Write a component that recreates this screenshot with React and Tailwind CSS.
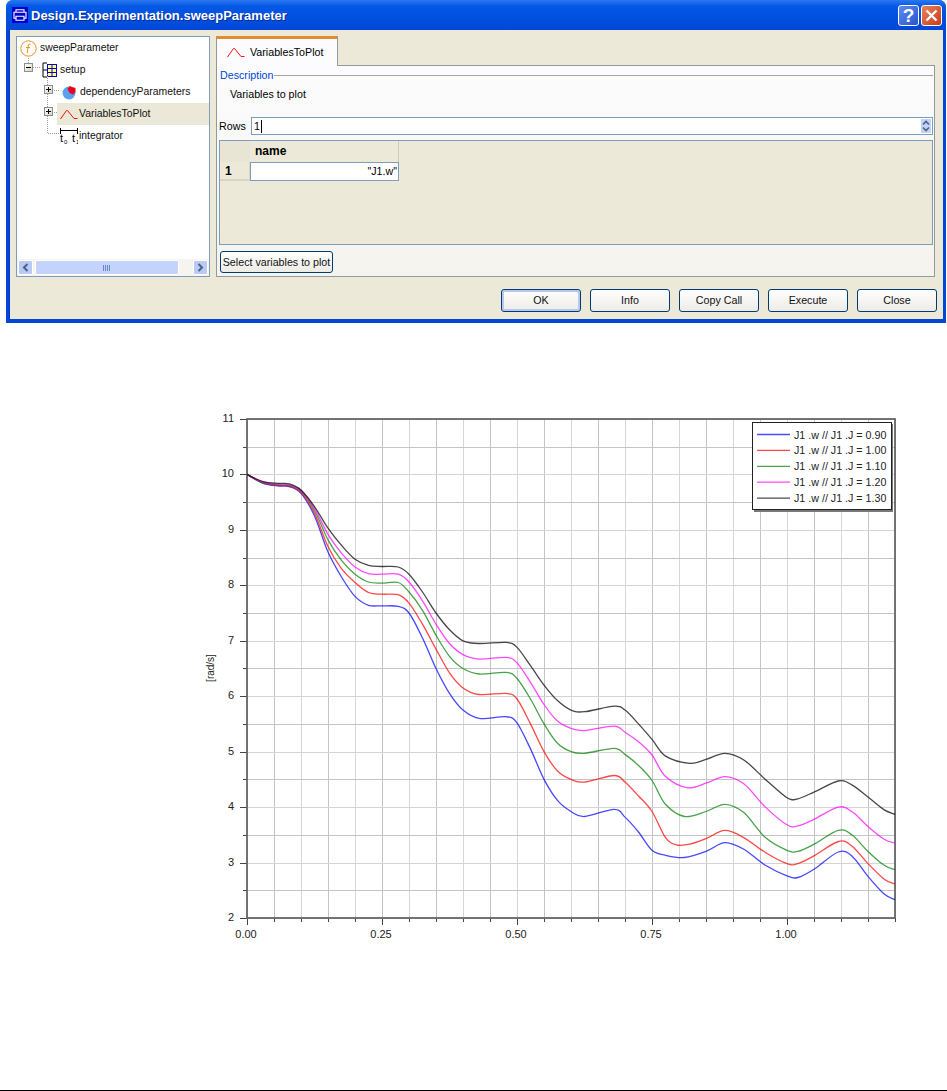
const FONT = "font-['Liberation_Sans',Arial,sans-serif]";

const xs = [0, 0.03, 0.06, 0.1, 0.125, 0.15, 0.175, 0.2, 0.225, 0.25, 0.28, 0.3, 0.325, 0.35, 0.375, 0.4, 0.43, 0.48, 0.5, 0.525, 0.55, 0.575, 0.6, 0.625, 0.68, 0.7, 0.725, 0.75];

const curves = [
  {
    label: "J1 .w // J1 .J = 0.90",
    color: "#0000ff",
    values: [10, 9.84, 9.79, 9.66, 9.25, 8.6, 8.15, 7.8, 7.64, 7.63, 7.62, 7.5, 7.05, 6.5, 6.05, 5.75, 5.6, 5.63, 5.52, 5.05, 4.5, 4.12, 3.92, 3.83, 3.96, 3.82, 3.55, 3.22],
    tail: [[0.775, 3.13], [0.81, 3.09], [0.85, 3.2], [0.885, 3.36], [0.92, 3.24], [0.96, 2.95], [1.0, 2.76], [1.02, 2.73], [1.05, 2.88], [1.095, 3.19], [1.12, 3.12], [1.15, 2.75], [1.18, 2.43], [1.2, 2.33]],
  },
  {
    label: "J1 .w // J1 .J = 1.00",
    color: "#ff0000",
    values: [10, 9.85, 9.8, 9.68, 9.3, 8.7, 8.3, 8.05, 7.87, 7.84, 7.83, 7.68, 7.3, 6.85, 6.42, 6.15, 6.03, 6.05, 5.95, 5.5, 5.0, 4.65, 4.5, 4.45, 4.57, 4.45, 4.2, 3.92],
    tail: [[0.775, 3.45], [0.795, 3.32], [0.82, 3.33], [0.85, 3.43], [0.885, 3.58], [0.92, 3.45], [0.96, 3.18], [1.0, 2.98], [1.02, 2.98], [1.05, 3.12], [1.095, 3.38], [1.12, 3.3], [1.15, 2.98], [1.18, 2.7], [1.2, 2.61]],
  },
  {
    label: "J1 .w // J1 .J = 1.10",
    color: "#008000",
    values: [10, 9.85, 9.81, 9.7, 9.35, 8.82, 8.45, 8.2, 8.06, 8.04, 8.05, 7.88, 7.55, 7.1, 6.72, 6.5, 6.4, 6.43, 6.32, 5.95, 5.5, 5.15, 5.0, 4.97, 5.06, 4.95, 4.75, 4.48],
    tail: [[0.775, 4.05], [0.81, 3.83], [0.85, 3.92], [0.885, 4.05], [0.92, 3.9], [0.96, 3.45], [1.0, 3.22], [1.02, 3.2], [1.05, 3.33], [1.095, 3.58], [1.12, 3.5], [1.15, 3.2], [1.18, 2.95], [1.2, 2.87]],
  },
  {
    label: "J1 .w // J1 .J = 1.20",
    color: "#ff00ff",
    values: [10, 9.86, 9.82, 9.71, 9.39, 8.92, 8.58, 8.33, 8.21, 8.2, 8.2, 8.06, 7.72, 7.3, 6.95, 6.75, 6.67, 6.7, 6.6, 6.25, 5.85, 5.55, 5.42, 5.38, 5.46, 5.35, 5.18, 4.94],
    tail: [[0.775, 4.55], [0.815, 4.35], [0.85, 4.43], [0.885, 4.55], [0.92, 4.42], [0.96, 4.0], [1.0, 3.68], [1.02, 3.66], [1.05, 3.78], [1.095, 4.0], [1.12, 3.92], [1.15, 3.65], [1.18, 3.42], [1.2, 3.35]],
  },
  {
    label: "J1 .w // J1 .J = 1.30",
    color: "#000000",
    values: [10, 9.87, 9.84, 9.72, 9.42, 9.03, 8.72, 8.47, 8.36, 8.34, 8.33, 8.2, 7.88, 7.5, 7.2, 7.0, 6.95, 6.97, 6.88, 6.55, 6.2, 5.92, 5.75, 5.72, 5.82, 5.75, 5.5, 5.22],
    tail: [[0.775, 4.92], [0.82, 4.79], [0.85, 4.86], [0.885, 4.97], [0.92, 4.85], [0.96, 4.5], [1.0, 4.17], [1.02, 4.15], [1.05, 4.27], [1.095, 4.47], [1.12, 4.4], [1.15, 4.18], [1.18, 3.95], [1.2, 3.87]],
  },
];

const plotX = (v) => 247 + v * 540;
const plotY = (v) => 419 + (11 - v) * 55.44;

function curvePoints(curve) {
  const head = curve.values.map((y, i) => [xs[i], y]);
  // shoulder before the first drop stays flat a little longer
  head.splice(3, 0, [0.078, curve.values[2] - 0.01]);
  return [...head, ...curve.tail];
}

function smoothPath(points) {
  const pts = points.map(([x, y]) => [plotX(x), plotY(y)]);
  let d = `M${pts[0][0]} ${pts[0][1]}`;
  for (let i = 0; i < pts.length - 1; i++) {
    const p0 = pts[i - 1] || pts[i];
    const p1 = pts[i];
    const p2 = pts[i + 1];
    const p3 = pts[i + 2] || p2;
    const c1x = p1[0] + (p2[0] - p0[0]) / 6;
    const c1y = p1[1] + (p2[1] - p0[1]) / 6;
    const c2x = p2[0] - (p3[0] - p1[0]) / 6;
    const c2y = p2[1] - (p3[1] - p1[1]) / 6;
    d += ` C${c1x.toFixed(1)} ${c1y.toFixed(1)} ${c2x.toFixed(1)} ${c2y.toFixed(1)} ${p2[0].toFixed(1)} ${p2[1].toFixed(1)}`;
  }
  return d;
}

function Chart() {
  const vertical = [];
  for (let i = 0; i <= 24; i++) vertical.push(i * 0.05);
  const horizontal = [];
  for (let i = 0; i <= 18; i++) horizontal.push(2 + i * 0.5);

  return (
    <svg width="947" height="660" viewBox="0 330 947 660" className="block">
      {vertical.map((v, i) => {
        const x = Math.round(plotX(v)) + 0.5;
        const major = i % 5 === 0;
        return (
          <g key={i}>
            <line x1={x} x2={x} y1="419" y2="918" stroke={i % 2 ? "#c4c4c4" : "#d6d6d6"} />
            <line x1={x} x2={x} y1="918" y2={major ? 925 : 922} stroke="#444" />
          </g>
        );
      })}
      {horizontal.map((v, i) => {
        const y = Math.round(plotY(v)) + 0.5;
        const major = i % 2 === 0;
        return (
          <g key={i}>
            <line x1="247" x2="895" y1={y} y2={y} stroke={major ? "#d4d4d4" : "#c4c4c4"} />
            <line x1={major ? 240 : 243} x2="247" y1={y} y2={y} stroke="#444" />
          </g>
        );
      })}
      <rect x="247" y="419" width="648" height="499" fill="none" stroke="#5f5f5f" strokeWidth="1.7" />

      {curves.map((curve) => (
        <path
          key={curve.color}
          d={smoothPath(curvePoints(curve))}
          fill="none"
          stroke={curve.color}
          strokeWidth="1.3"
          opacity="0.72"
        />
      ))}

      {[2, 3, 4, 5, 6, 7, 8, 9, 10, 11].map((v) => (
        <text key={v} x="234" y={plotY(v) + 3} textAnchor="end" fontSize="11" fill="#222" fontFamily="Liberation Sans">
          {v}
        </text>
      ))}
      {["0.00", "0.25", "0.50", "0.75", "1.00"].map((label, i) => (
        <text key={label} x={247 + i * 135 - 1} y="938" textAnchor="middle" fontSize="11" fill="#222" fontFamily="Liberation Sans">
          {label}
        </text>
      ))}
      <text x="0" y="0" transform="translate(214 668) rotate(-90)" textAnchor="middle" fontSize="10" fill="#222" fontFamily="Liberation Sans">
        [rad/s]
      </text>

      <rect x="754" y="424" width="139" height="88" fill="#777" />
      <rect x="752.5" y="422.5" width="139" height="87" fill="#fff" stroke="#222" />
      {curves.map((curve, i) => {
        const y = 434.5 + i * 15.9;
        return (
          <g key={curve.label}>
            <line x1="757" x2="790" y1={y} y2={y} stroke={curve.color} strokeWidth="1.3" opacity="0.7" />
            <text x="794" y={y + 4} fontSize="10.7" fill="#222" fontFamily="Liberation Sans">
              {curve.label}
            </text>
          </g>
        );
      })}
    </svg>
  );
}

function FunctionIcon() {
  return (
    <svg width="17" height="17" viewBox="0 0 17 17" className="shrink-0">
      <circle cx="8.5" cy="8.5" r="7.7" fill="#fff" stroke="#f08c1e" />
      <path d="M10.5 4.2C9 3.7 8.4 4.5 8.2 6L7.2 13M6 7.5H10" fill="none" stroke="#f08c1e" />
    </svg>
  );
}

function RecordIcon() {
  return (
    <svg width="16" height="16" viewBox="0 0 16 16" className="shrink-0">
      <path d="M1 1V15M1 1H5M1 8H5M1 15H5" stroke="#000" fill="none" />
      <rect x="5.5" y="2.5" width="9" height="12" fill="#ffff80" stroke="#0000d0" />
      <path d="M10 2.5V14.5M5.5 6.5H14.5M5.5 10.5H14.5" stroke="#0000d0" />
    </svg>
  );
}

function PieIcon() {
  return (
    <svg width="15" height="15" viewBox="0 0 15 15" className="shrink-0">
      <circle cx="7" cy="8" r="6.5" fill="#5aa2f0" />
      <path d="M7 7L5.5 3.5L8 1L10 2L13.5 3L13.5 7L11 9.5L8.5 8.5Z" fill="#e8001c" />
    </svg>
  );
}

function CurveIcon() {
  return (
    <svg width="18" height="11" viewBox="0 0 18 11" className="shrink-0">
      <path d="M0.5 10L6.5 1.5Q7 1 7.5 1.5L14 9.5H17.5" fill="none" stroke="#f01010" strokeWidth="1" />
    </svg>
  );
}

function IntegratorIcon() {
  return (
    <svg width="18" height="17" viewBox="0 0 18 17" className="shrink-0">
      <path d="M0.5 0V6M17.5 0V6M0.5 2.5H17.5" stroke="#000" fill="none" />
      <text x="0" y="14" fontSize="11" fontFamily="Liberation Sans">t</text>
      <text x="4" y="16" fontSize="6" fontFamily="Liberation Sans">0</text>
      <text x="12" y="14" fontSize="11" fontFamily="Liberation Sans">t</text>
      <text x="16" y="16" fontSize="6" fontFamily="Liberation Sans">1</text>
    </svg>
  );
}

function Expander({ open }) {
  return (
    <span className="relative z-10 mb-[5px] flex h-[9px] w-[9px] shrink-0 items-center justify-center border border-[#8a8f94] bg-gradient-to-br from-white to-[#d8d4c4]">
      <span className="relative block h-px w-[5px] bg-black">
        {!open && <span className="absolute left-[2px] top-[-2px] block h-[5px] w-px bg-black" />}
      </span>
    </span>
  );
}

function TreeRow({ indent, children }) {
  return <div className={`flex h-[22px] items-center ${indent}`}>{children}</div>;
}

function TreePanel() {
  return (
    <div className="relative flex h-[241px] w-[194px] shrink-0 flex-col border border-[#7f9db9] bg-white text-[10.4px]">
      {/* dotted connectors */}
      <svg className="absolute left-0 top-0" width="70" height="110" fill="none" stroke="#9a9a9a" strokeDasharray="1 1">
        <path d="M11.5 21V26M16 30.5H24M30.5 37V96.5H42M35 53.5H43M35 75.5H40" />
      </svg>
      <div className="flex-1 text-[#111]">
        <TreeRow indent="pl-[3px] gap-[3px]">
          <FunctionIcon />
          <span className="pt-px">sweepParameter</span>
        </TreeRow>
        <TreeRow indent="pl-[7px]">
          <Expander open />
          <span className="ml-[9px]"><RecordIcon /></span>
          <span className="ml-[2px] pt-px">setup</span>
        </TreeRow>
        <TreeRow indent="pl-[27px]">
          <Expander />
          <span className="ml-[9px]"><PieIcon /></span>
          <span className="ml-[3px] pt-px">dependencyParameters</span>
        </TreeRow>
        <TreeRow indent="pl-[27px]">
          <Expander />
          <div className="ml-[4px] flex h-[22px] flex-1 items-center bg-[#ebe8d8] pl-[3px]">
            <CurveIcon />
            <span className="ml-px pt-px">VariablesToPlot</span>
          </div>
        </TreeRow>
        <TreeRow indent="pl-[43px]">
          <IntegratorIcon />
          <span className="ml-px pt-px">integrator</span>
        </TreeRow>
      </div>
      <div className="flex h-[17px] items-center bg-[#f5f4ee] px-[1px]">
        <ScrollArrow dir="left" />
        <div className="ml-[2px] flex h-[15px] w-[144px] items-center justify-center rounded-[2px] border border-white bg-[#c3d3fb]">
          <span className="block h-[6px] w-[8px] bg-[repeating-linear-gradient(90deg,#6f86c4_0,#6f86c4_1px,transparent_1px,transparent_2px)]" />
        </div>
        <div className="flex-1" />
        <ScrollArrow dir="right" />
      </div>
    </div>
  );
}

function ScrollArrow({ dir }) {
  return (
    <div className="flex h-[15px] w-[15px] items-center justify-center rounded-[2px] border border-white bg-[#b9caf5]">
      <svg width="7" height="9" viewBox="0 0 7 9">
        <path d={dir === "left" ? "M5.5 1L2 4.5L5.5 8" : "M1.5 1L5 4.5L1.5 8"} fill="none" stroke="#4d6185" strokeWidth="2" />
      </svg>
    </div>
  );
}

function XpButton({ children, active, className }) {
  return (
    <div
      className={`flex items-center justify-center rounded-[3px] border border-[#003c74] bg-gradient-to-b from-white to-[#ecebe5] text-[#111] ${
        active ? "shadow-[inset_0_0_0_2px_#b6caf0]" : ""
      } ${className}`}
    >
      {children}
    </div>
  );
}

function RightPanel() {
  return (
    <div className="flex min-w-0 flex-1 flex-col">
      <div className="relative z-10 mb-[-1px] flex h-[30px] w-[122px] items-center gap-[5px] border-x border-[#919b9c] border-t-[3px] border-t-[#e68b2c] bg-[#fcfcfe] pb-[1px] pl-[10px]">
        <CurveIcon />
        <span>VariablesToPlot</span>
      </div>
      <div className="flex h-[212px] flex-col border border-[#919b9c] bg-gradient-to-b from-[#fcfcfe] to-[#f4f3ee] pl-[2px] pr-[1px]">
        <div className="mt-[2px] flex h-[14px] items-center pl-[1px]">
          <span className="text-[#0046d5]">Description</span>
          <span className="ml-[1px] h-px flex-1 bg-[#a5a79e]" />
        </div>
        <div className="mt-[5px] h-[14px] pl-[11px] leading-[14px]">Variables to plot</div>
        <div className="mt-[16px] flex h-[18px] items-center">
          <span className="w-[32px]">Rows</span>
          <div className="flex h-[18px] flex-1 items-center justify-between border border-[#7f9db9] bg-white pl-[2px] pr-[1px]">
            <span className="flex items-center">1<span className="ml-px inline-block h-[13px] w-px bg-black" /></span>
            <div className="flex h-[14px] w-[10px] flex-col items-center justify-center bg-[#c3d3fb]">
              <svg width="8" height="12" viewBox="0 0 8 12">
                <path d="M1 4.5L4 1.5L7 4.5M1 7.5L4 10.5L7 7.5" fill="none" stroke="#4d6185" strokeWidth="1.6" />
              </svg>
            </div>
          </div>
        </div>
        <div className="mt-[5px] h-[105px] border border-[#7f9db9] bg-[#ece9d8]">
          <div className="flex h-[21px]">
            <div className="w-[30px] bg-[#e8e5d4]" />
            <div className="flex w-[149px] items-center border-r border-[#cfccbb] pb-[1px] pl-[5px] text-[12px] font-bold">name</div>
          </div>
          <div className="flex h-[19px]">
            <div className="flex w-[30px] items-center border-b-2 border-r border-[#d8d5c4] pl-[5px] text-[12px] font-bold">1</div>
            <div className="flex w-[149px] items-center justify-end border border-[#7f9db9] bg-white pr-px">"J1.w"</div>
          </div>
        </div>
        <div className="ml-px mt-[6px]">
          <XpButton className="h-[22px] w-[113px] whitespace-nowrap">Select variables to plot</XpButton>
        </div>
      </div>
    </div>
  );
}

function TitleBar() {
  return (
    <div className="flex h-[30px] shrink-0 items-center rounded-t-[7px] bg-gradient-to-b from-[#2a78f0] via-[#0358e6] via-[20%] to-[#0047d8] pr-[4px]">
      <svg width="16" height="16" viewBox="0 0 20 20" className="ml-[6px] shrink-0">
        <rect width="20" height="20" fill="#0000d0" />
        <path d="M5 6.5V3.5H15V6.5M5 14H2.5V6.5H17.5V14H15M5 11.5H15V16.5H5Z" fill="none" stroke="#fff" strokeWidth="1.4" />
      </svg>
      <span className="ml-[3px] text-[13px] font-bold text-white [text-shadow:1px_1px_0_#0a2a90]">
        Design.Experimentation.sweepParameter
      </span>
      <div className="ml-auto flex gap-[2px]">
        <div className="flex h-[21px] w-[21px] items-center justify-center rounded-[3px] border border-white bg-gradient-to-br from-[#5f8cf0] to-[#2a52d0] text-[19px] font-bold leading-none text-white">
          ?
        </div>
        <div className="flex h-[21px] w-[21px] items-center justify-center rounded-[3px] border border-white bg-gradient-to-br from-[#e8805c] to-[#c93a12]">
          <svg width="13" height="13" viewBox="0 0 13 13">
            <path d="M1.5 1.5L11.5 11.5M11.5 1.5L1.5 11.5" stroke="#fff" strokeWidth="2.4" />
          </svg>
        </div>
      </div>
    </div>
  );
}

function Dialog() {
  const buttons = ["OK", "Info", "Copy Call", "Execute", "Close"];

  return (
    <div className="ml-[6px] flex h-[323px] w-[940px] flex-col rounded-t-[7px] bg-[#0047d8]">
      <TitleBar />
      <div className="mx-[3px] mb-[4px] flex flex-1 flex-col border-l border-[#0831d9] bg-[#ece9d8] pl-[6px] pr-[1px] pt-[6px]">
        <div className="flex gap-[6px] pr-[7px]">
          <TreePanel />
          <RightPanel />
        </div>
        <div className="mt-[12px] flex justify-end gap-[9px] pr-[5px]">
          {buttons.map((label, i) => (
            <XpButton key={label} active={i === 0} className="h-[23px] w-[80px]">
              {label}
            </XpButton>
          ))}
        </div>
      </div>
    </div>
  );
}

export default function App() {
  return (
    <div className={`flex h-[1091px] w-[947px] flex-col bg-white text-[10.7px] leading-none ${FONT}`}>
      <Dialog />
      <div className="mt-[7px]">
        <Chart />
      </div>
      <div className="mt-auto h-px w-full bg-black" />
    </div>
  );
}
